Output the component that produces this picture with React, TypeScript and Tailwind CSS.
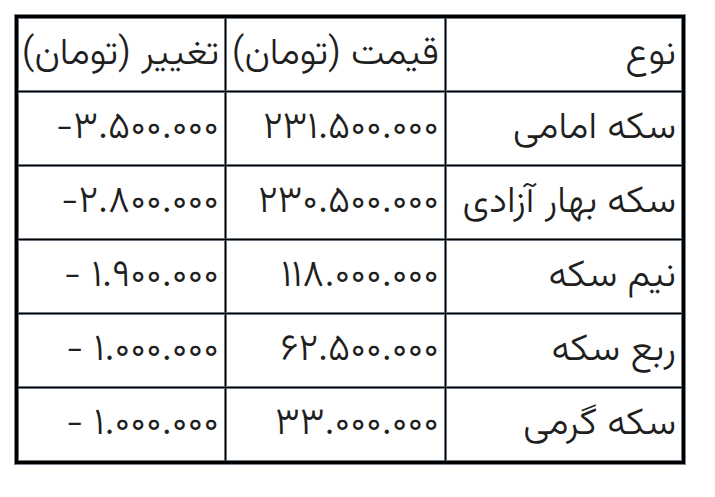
import React from "react";

const rows: [string, string, string][] = [
  ["سکه امامی", "۲۳۱.۵۰۰.۰۰۰", "-۳.۵۰۰.۰۰۰"],
  ["سکه بهار آزادی", "۲۳۰.۵۰۰.۰۰۰", "-۲.۸۰۰.۰۰۰"],
  ["نیم سکه", "۱۱۸.۰۰۰.۰۰۰", "- ۱.۹۰۰.۰۰۰"],
  ["ربع سکه", "۶۲.۵۰۰.۰۰۰", "- ۱.۰۰۰.۰۰۰"],
  ["سکه گرمی", "۳۳.۰۰۰.۰۰۰", "- ۱.۰۰۰.۰۰۰"],
];

function Cell({ children }: { children: React.ReactNode }) {
  return (
    <div className="bg-white border border-[#6b7680] flex items-center justify-start pr-[5px] h-[73px] whitespace-nowrap">
      {children}
    </div>
  );
}

export default function App() {
  return (
    <div className="w-[715px] h-[497px] bg-white pt-[14px] pl-[14px]">
      <div
        dir="rtl"
        className="w-[672px] border border-[#7a848e] text-[38px] font-light text-[#1f1f1f] leading-none"
        style={{ fontFamily: 'Vazirmatn, "DejaVu Sans", sans-serif' }}
      >
        <div className="grid grid-cols-[236px_219px_207px] gap-px bg-black border-[3px] border-black">
          <Cell>نوع</Cell>
          <Cell>قیمت (تومان)</Cell>
          <Cell>تغییر (تومان)</Cell>
          {rows.map((r) => (
            <React.Fragment key={r[0]}>
              <Cell>{r[0]}</Cell>
              <Cell>
                <bdi dir="ltr">{r[1]}</bdi>
              </Cell>
              <Cell>
                <bdi dir="ltr">{r[2]}</bdi>
              </Cell>
            </React.Fragment>
          ))}
        </div>
      </div>
    </div>
  );
}
